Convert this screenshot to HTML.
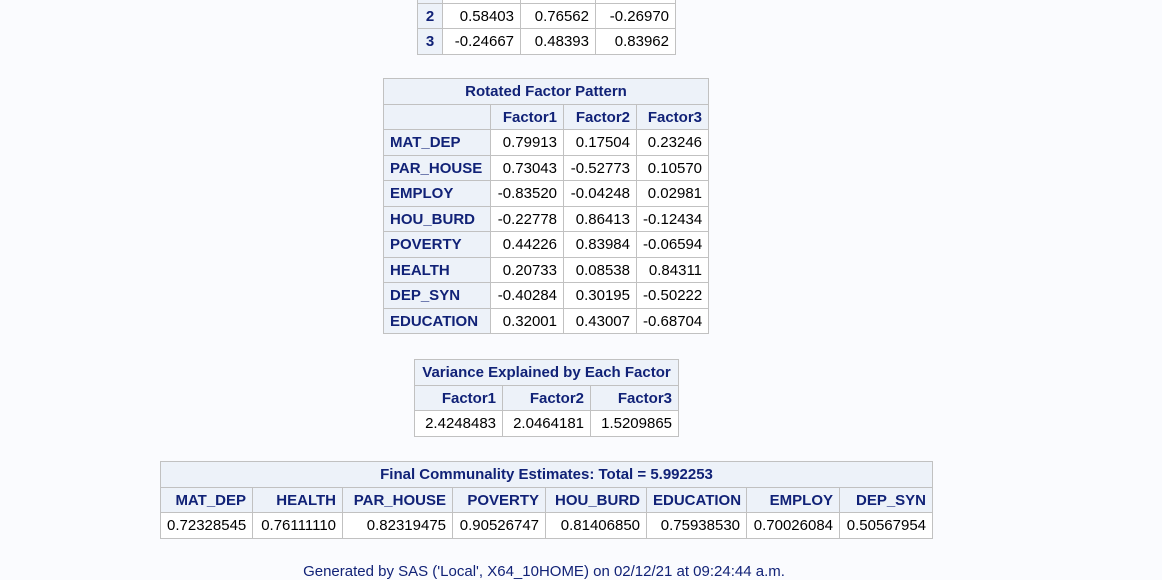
<!DOCTYPE html>
<html><head><meta charset="utf-8"><style>
body{margin:0;background:#fafbfe;width:1162px;height:570px;overflow:hidden;position:relative;font-family:"Liberation Sans",Arial,sans-serif;font-size:15px;color:#000}
table{position:absolute;border-collapse:collapse;table-layout:fixed;background:#fff}
td{border:1px solid #c1c1c1;padding:2px 6px 0 6px;height:22.5px;line-height:22px;text-align:right;white-space:nowrap;overflow:hidden}
td.h{background:#edf2f9;color:#112277;font-weight:bold}
td.l{text-align:left}
td.c{text-align:center}
.foot{position:absolute;top:563px;left:0;width:1088px;text-align:center;color:#112277;font-size:15px}
</style></head><body>

<table style="left:417px;top:-23px;width:258px">
<colgroup><col style="width:25px"><col style="width:78px"><col style="width:75px"><col style="width:80px"></colgroup>
<tr><td class="h c">1</td><td></td><td></td><td></td></tr>
<tr><td class="h c">2</td><td>0.58403</td><td>0.76562</td><td>-0.26970</td></tr>
<tr><td class="h c">3</td><td>-0.24667</td><td>0.48393</td><td>0.83962</td></tr>
</table>

<table style="left:383px;top:78px;width:325px">
<colgroup><col style="width:107px"><col style="width:73px"><col style="width:73px"><col style="width:72px"></colgroup>
<tr><td class="h c" colspan="4">Rotated Factor Pattern</td></tr>
<tr><td class="h"></td><td class="h">Factor1</td><td class="h">Factor2</td><td class="h">Factor3</td></tr>
<tr><td class="h l">MAT_DEP</td><td>0.79913</td><td>0.17504</td><td>0.23246</td></tr>
<tr><td class="h l">PAR_HOUSE</td><td>0.73043</td><td>-0.52773</td><td>0.10570</td></tr>
<tr><td class="h l">EMPLOY</td><td>-0.83520</td><td>-0.04248</td><td>0.02981</td></tr>
<tr><td class="h l">HOU_BURD</td><td>-0.22778</td><td>0.86413</td><td>-0.12434</td></tr>
<tr><td class="h l">POVERTY</td><td>0.44226</td><td>0.83984</td><td>-0.06594</td></tr>
<tr><td class="h l">HEALTH</td><td>0.20733</td><td>0.08538</td><td>0.84311</td></tr>
<tr><td class="h l">DEP_SYN</td><td>-0.40284</td><td>0.30195</td><td>-0.50222</td></tr>
<tr><td class="h l">EDUCATION</td><td>0.32001</td><td>0.43007</td><td>-0.68704</td></tr>
</table>

<table style="left:414px;top:359px;width:264px">
<colgroup><col style="width:88px"><col style="width:88px"><col style="width:88px"></colgroup>
<tr><td class="h c" colspan="3">Variance Explained by Each Factor</td></tr>
<tr><td class="h">Factor1</td><td class="h">Factor2</td><td class="h">Factor3</td></tr>
<tr><td>2.4248483</td><td>2.0464181</td><td>1.5209865</td></tr>
</table>

<table style="left:160px;top:461px;width:772px">
<colgroup><col style="width:92px"><col style="width:90px"><col style="width:110px"><col style="width:93px"><col style="width:101px"><col style="width:100px"><col style="width:93px"><col style="width:93px"></colgroup>
<tr><td class="h c" colspan="8">Final Communality Estimates: Total = 5.992253</td></tr>
<tr><td class="h">MAT_DEP</td><td class="h">HEALTH</td><td class="h">PAR_HOUSE</td><td class="h">POVERTY</td><td class="h">HOU_BURD</td><td class="h">EDUCATION</td><td class="h">EMPLOY</td><td class="h">DEP_SYN</td></tr>
<tr><td>0.72328545</td><td>0.76111110</td><td>0.82319475</td><td>0.90526747</td><td>0.81406850</td><td>0.75938530</td><td>0.70026084</td><td>0.50567954</td></tr>
</table>

<div class="foot">Generated by SAS ('Local', X64_10HOME) on 02/12/21 at 09:24:44 a.m.</div>
</body></html>
